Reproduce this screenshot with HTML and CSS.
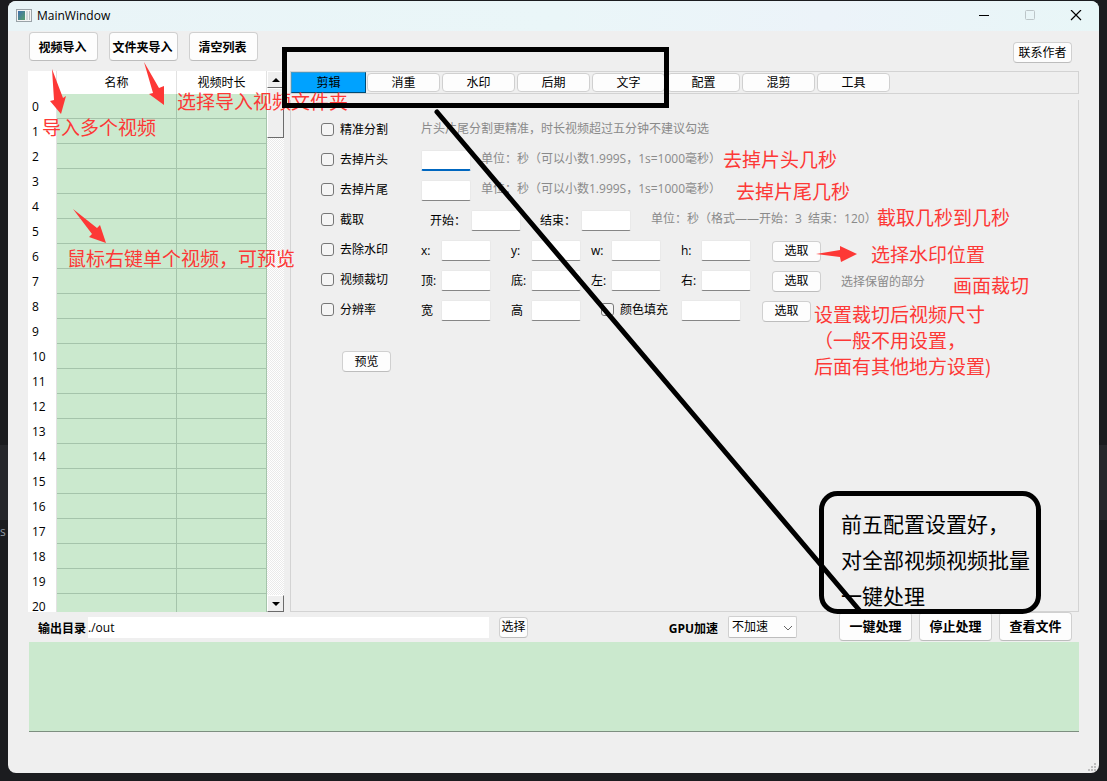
FILE: index.html
```html
<!DOCTYPE html>
<html lang="zh-CN">
<head>
<meta charset="utf-8">
<title>MainWindow</title>
<link rel="stylesheet" href="styles.css">
</head>
<body>
<span class="backdrop-text">s</span>
<div class="window">
  <header class="titlebar">
    <svg class="app-icon" width="16" height="14" viewBox="0 0 16 14" aria-hidden="true">
      <defs><linearGradient id="pane" x1="0" y1="0" x2="1" y2="1"><stop offset="0" stop-color="#3f6fae"/><stop offset="1" stop-color="#5aa06a"/></linearGradient></defs>
      <rect x="0.5" y="0.5" width="15" height="12" fill="#f4f4f4" stroke="#9aa3a8"/>
      <rect x="2" y="2" width="7" height="9" fill="url(#pane)"/>
      <rect x="10" y="2" width="2" height="9" fill="#d4d8da"/>
      <rect x="13" y="2" width="1" height="9" fill="#b9bec1"/>
    </svg>
    <h1 class="title">MainWindow</h1>
    <div class="controls">
      <button class="control" aria-label="最小化"><svg width="12" height="12" viewBox="0 0 12 12"><path d="M1 5.5h10" stroke="#000"/></svg></button>
      <button class="control" aria-label="最大化" disabled><svg width="12" height="12" viewBox="0 0 12 12"><rect x="1.500" y="0.500" width="9" height="9" rx="1" fill="none" stroke="#bcc5c8"/></svg></button>
      <button class="control" aria-label="关闭"><svg width="12" height="12" viewBox="0 0 12 12"><path d="M1 0l10 10M11 0L1 10" stroke="#000" stroke-width="1.200"/></svg></button>
    </div>
  </header>

  <div class="toolbar">
    <button class="btn big">视频导入</button>
    <button class="btn big">文件夹导入</button>
    <button class="btn big">清空列表</button>
    <button class="btn contact">联系作者</button>
  </div>

  <main class="main">
    <div class="list">
      <div class="table-clip">
        <table class="files">
          <colgroup><col class="col-index"><col><col class="col-time"></colgroup>
          <thead><tr><th></th><th>名称</th><th>视频时长</th></tr></thead>
          <tbody>
            <tr><th>0</th><td></td><td></td></tr>
            <tr><th>1</th><td></td><td></td></tr>
            <tr><th>2</th><td></td><td></td></tr>
            <tr><th>3</th><td></td><td></td></tr>
            <tr><th>4</th><td></td><td></td></tr>
            <tr><th>5</th><td></td><td></td></tr>
            <tr><th>6</th><td></td><td></td></tr>
            <tr><th>7</th><td></td><td></td></tr>
            <tr><th>8</th><td></td><td></td></tr>
            <tr><th>9</th><td></td><td></td></tr>
            <tr><th>10</th><td></td><td></td></tr>
            <tr><th>11</th><td></td><td></td></tr>
            <tr><th>12</th><td></td><td></td></tr>
            <tr><th>13</th><td></td><td></td></tr>
            <tr><th>14</th><td></td><td></td></tr>
            <tr><th>15</th><td></td><td></td></tr>
            <tr><th>16</th><td></td><td></td></tr>
            <tr><th>17</th><td></td><td></td></tr>
            <tr><th>18</th><td></td><td></td></tr>
            <tr><th>19</th><td></td><td></td></tr>
            <tr><th>20</th><td></td><td></td></tr>
          </tbody>
        </table>
      </div>
      <div class="scrollbar">
        <button class="bevel arrow" aria-label="向上"><svg width="8" height="4" viewBox="0 0 8 4"><path d="M0 4L4 0L8 4z"/></svg></button>
        <div class="bevel thumb"></div>
        <button class="bevel arrow down" aria-label="向下"><svg width="8" height="4" viewBox="0 0 8 4"><path d="M0 0H8L4 4z"/></svg></button>
      </div>
    </div>

    <section class="panel">
      <nav class="tabs">
        <button class="tab active">剪辑</button>
        <button class="tab">消重</button>
        <button class="tab">水印</button>
        <button class="tab">后期</button>
        <button class="tab">文字</button>
        <button class="tab">配置</button>
        <button class="tab">混剪</button>
        <button class="tab">工具</button>
      </nav>
      <form class="settings">
        <div class="row">
          <label class="check"><input type="checkbox"><span>精准分割</span></label>
          <span class="hint">片头片尾分割更精准，时长视频超过五分钟不建议勾选</span>
        </div>
        <div class="row">
          <label class="check"><input type="checkbox"><span>去掉片头</span></label>
          <input class="box focused" type="text" aria-label="片头秒数">
          <span class="hint after">单位：秒（可以小数1.999S，1s=1000毫秒）</span>
        </div>
        <div class="row">
          <label class="check"><input type="checkbox"><span>去掉片尾</span></label>
          <input class="box" type="text" aria-label="片尾秒数">
          <span class="hint after">单位：秒（可以小数1.999S，1s=1000毫秒）</span>
        </div>
        <div class="row">
          <label class="check"><input type="checkbox"><span>截取</span></label>
          <label class="field range"><span>开始：</span><input class="box" type="text"></label>
          <label class="field range"><span>结束：</span><input class="box" type="text"></label>
          <span class="hint end">单位：秒（格式——开始：3&nbsp; 结束：120）</span>
        </div>
        <div class="row">
          <label class="check"><input type="checkbox"><span>去除水印</span></label>
          <label class="field"><span>x:</span><input class="box" type="text"></label>
          <label class="field tight"><span>y:</span><input class="box" type="text"></label>
          <label class="field"><span>w:</span><input class="box" type="text"></label>
          <label class="field"><span>h:</span><input class="box" type="text"></label>
          <button class="btn pick" type="button">选取</button>
        </div>
        <div class="row">
          <label class="check"><input type="checkbox"><span>视频裁切</span></label>
          <label class="field"><span>顶:</span><input class="box" type="text"></label>
          <label class="field tight"><span>底:</span><input class="box" type="text"></label>
          <label class="field"><span>左:</span><input class="box" type="text"></label>
          <label class="field"><span>右:</span><input class="box" type="text"></label>
          <button class="btn pick" type="button">选取</button>
          <span class="hint end low">选择保留的部分</span>
        </div>
        <div class="row">
          <label class="check"><input type="checkbox"><span>分辨率</span></label>
          <label class="field"><span>宽</span><input class="box" type="text"></label>
          <label class="field"><span>高</span><input class="box" type="text"></label>
          <label class="check fill"><input type="checkbox"><span>颜色填充</span></label>
          <input class="box wide" type="text" aria-label="填充颜色">
          <button class="btn pick" type="button">选取</button>
        </div>
        <button class="btn preview" type="button">预览</button>
      </form>
    </section>
  </main>

  <div class="output">
    <label class="strong" for="out">输出目录</label>
    <input class="path" id="out" type="text" value="./out">
    <button class="btn choose">选择</button>
    <label class="strong gpu" for="gpu">GPU加速</label>
    <div class="select-wrap">
      <select class="select" id="gpu"><option>不加速</option></select>
      <svg class="chevron" width="10" height="6" viewBox="0 0 10 6" aria-hidden="true"><path d="M1 1l4 4l4-4" fill="none" stroke="#666"/></svg>
    </div>
    <div class="actions">
      <button class="btn action">一键处理</button>
      <button class="btn action">停止处理</button>
      <button class="btn action">查看文件</button>
    </div>
  </div>

  <textarea class="log" readonly aria-label="日志"></textarea>

  <footer class="status">
    <svg width="9" height="9" viewBox="0 0 9 9" fill="#bdbdbd" aria-hidden="true"><path d="M6 0h2v2H6zM3 3h2v2H3zM6 3h2v2H6zM0 6h2v2H0zM3 6h2v2H3zM6 6h2v2H6z"/></svg>
  </footer>
</div>

<div class="notes">
  <p class="note n-import">导入多个视频</p>
  <p class="note n-folder">选择导入视频文件夹</p>
  <p class="note n-menu">鼠标右键单个视频，可预览</p>
  <p class="note n-head">去掉片头几秒</p>
  <p class="note n-tail">去掉片尾几秒</p>
  <p class="note n-range">截取几秒到几秒</p>
  <p class="note n-mark">选择水印位置</p>
  <p class="note n-crop">画面裁切</p>
  <p class="note n-size">设置裁切后视频尺寸<br>（一般不用设置，<br>后面有其他地方设置)</p>
  <p class="note n-batch">前五配置设置好，<br>对全部视频视频批量<br>一键处理</p>
  <svg class="strokes" width="1107" height="781" viewBox="0 0 1107 781" aria-hidden="true">
    <g fill="#fd3836">
      <path d="M52 69L63 98L66 96L61 114L50 101L54 100z"/>
      <path d="M144 62L159 88L164 86L164 105L149 94L153 93z"/>
      <path d="M73 209L97 228L100 225L106 243L89 237L92 234z"/>
      <path d="M816 254L840 250L840 246L857 254L841 262L840 257z"/>
    </g>
    <g fill="none" stroke="#000" stroke-width="5">
      <rect x="284.500" y="49.500" width="382" height="56"/>
      <path d="M437 112L860 611" stroke-linecap="round"/>
      <rect x="821.500" y="493.500" width="217" height="118" rx="16"/>
    </g>
  </svg>
</div>
</body>
</html>
```

FILE: styles.css
```css
* {
  box-sizing: border-box;
}

body {
  margin: 0;
  height: 100vh;
  padding: 1px 8px 8px;
  position: relative;
  overflow: hidden;
  display: flex;
  background: linear-gradient(#1b1c1f 445px, #26272b 445px, #26272b 520px, #1b1c1f 520px);
  color: #000;
  font: 12px/16px "Open Sans", "Noto Sans CJK SC", sans-serif;
}

button,
input,
select,
textarea {
  font: inherit;
  color: inherit;
  margin: 0;
  padding: 0;
}

.backdrop-text {
  position: absolute;
  left: 0;
  top: 524px;
  color: #8f98a3;
}

.window {
  flex: 1;
  display: flex;
  flex-direction: column;
  background: #efefef;
  border-radius: 8px;
  overflow: hidden;
}

.titlebar {
  display: flex;
  align-items: center;
  height: 30px;
  padding-left: 8px;
  background: linear-gradient(90deg, #e9f4f7, #eaf6f8 50%, #ecf3f9 75%, #e8f6f7);
}

.title {
  margin: 0 0 0 5px;
  font-size: 12px;
  font-weight: 400;
}

.controls {
  display: flex;
  margin-left: auto;
}

.control {
  display: grid;
  place-items: center;
  width: 46px;
  height: 30px;
  border: 0;
  background: none;
}

.toolbar {
  display: flex;
  align-items: flex-start;
  gap: 11px;
  height: 40px;
  padding: 1px 27px 0 21px;
}

.btn {
  height: 21px;
  border: 1px solid #d0d0d0;
  border-bottom-color: #bdbdbd;
  border-radius: 4px;
  background: #fdfdfd;
  white-space: nowrap;
}

.big {
  width: 69px;
  height: 29px;
  padding: 2px 2px 0 0;
  font-weight: 700;
}

.contact {
  width: 59px;
  margin: 10px 0 0 auto;
}

.main {
  flex: 1;
  min-height: 0;
  display: flex;
  gap: 6px;
  padding: 0 20px;
}

.list {
  display: flex;
  width: 256px;
}

.table-clip {
  flex: 1;
  overflow: hidden;
  background: #fff;
}

.files {
  width: 100%;
  table-layout: fixed;
  border-collapse: separate;
  border-spacing: 0;
}

.col-index {
  width: 29px;
}

.col-time {
  width: 90px;
}

.files th,
.files td {
  height: 25px;
  padding: 0;
  font-weight: 400;
}

.files thead th {
  height: 23px;
  border-right: 1px solid #e2e2e2;
}

.files tbody th {
  padding-left: 4px;
  border-right: 1px solid #e2e2e2;
  text-align: left;
}

.files td {
  background: #cbe9ce;
  border-right: 1px solid #a5c4ab;
  border-bottom: 1px solid #a5c4ab;
}

.scrollbar {
  display: flex;
  flex-direction: column;
  width: 17px;
  background: repeating-conic-gradient(#fff 0 25%, #eaeaea 0 50%) 0 0 / 2px 2px;
}

.bevel {
  border: 1px solid;
  border-color: #fff #6b6b6b #6b6b6b #fff;
  background: #efefef;
}

.arrow {
  display: grid;
  place-items: center;
  height: 17px;
}

.thumb {
  height: 50px;
}

.down {
  margin-top: auto;
}

.panel {
  flex: 1;
  min-width: 0;
  display: flex;
  flex-direction: column;
  gap: 6px;
}

.tabs {
  display: flex;
  align-items: center;
  gap: 2px;
  height: 23px;
  border: 1px solid #d3d3d3;
}

.tab {
  width: 73px;
  height: 19px;
  border: 1px solid #d0d0d0;
  border-radius: 4px;
  background: #fdfdfd;
}

.tab.active {
  width: 75px;
  height: 21px;
  margin-right: -1px;
  border: 1px solid;
  border-color: #3f9ac9 #004a73 #004a73 #3f9ac9;
  border-radius: 0;
  background: #00a2ff;
}

.settings {
  flex: 1;
  padding: 14px 0 0 30px;
  border: 1px solid #d3d3d3;
  border-top: 0;
}

.row {
  display: flex;
  align-items: center;
  height: 30px;
}

.check {
  display: flex;
  align-items: center;
  gap: 6px;
  width: 100px;
}

.check span {
  padding-top: 2px;
}

.check input {
  appearance: none;
  width: 13px;
  height: 13px;
  border: 1px solid #777;
  border-radius: 3px;
  background: #f5f5f5;
}

.fill {
  width: 80px;
}

.hint {
  color: #8a8a8a;
  white-space: nowrap;
}

.after {
  margin-left: 10px;
}

.end {
  margin-left: 20px;
}

.low {
  padding-top: 5px;
}

.box {
  width: 50px;
  height: 21px;
  border: 1px solid #e9e9e9;
  border-bottom-color: #868686;
  border-radius: 2px;
  background: #fff;
}

.row > .box,
.field {
  margin-top: 2px;
}

.box.focused {
  border-bottom: 2px solid #0067c0;
}

.wide {
  width: 60px;
}

.field {
  display: grid;
  grid-template-columns: 20px 50px;
  align-items: center;
  margin-right: 20px;
  white-space: nowrap;
}

.field span {
  padding-top: 2px;
}

.tight {
  margin-right: 10px;
}

.range {
  grid-template-columns: 41px 50px;
  margin-left: 9px;
  margin-right: 0;
}

.range + .range {
  margin-left: 19px;
}

.pick {
  width: 49px;
  margin-top: 4px;
  margin-left: 1px;
}

.wide + .pick {
  margin-left: 21px;
}

.preview {
  width: 49px;
  margin: 27px 0 0 21px;
}

.output {
  display: flex;
  align-items: center;
  height: 30px;
  padding: 0 27px 0 30px;
}

.strong {
  padding-top: 4px;
  font-weight: 700;
  white-space: nowrap;
}

.path {
  width: 401px;
  height: 21px;
  margin: 0 10px 0 2px;
  border: 0;
  background: #fff;
}

.choose {
  width: 29px;
}

.gpu {
  margin-left: auto;
}

.select-wrap {
  position: relative;
  margin-left: 10px;
}

.select {
  appearance: none;
  width: 69px;
  height: 22px;
  padding-left: 3px;
  border: 1px solid #d0d0d0;
  border-bottom-color: #bdbdbd;
  border-radius: 2px;
  background: #fdfdfd;
}

.chevron {
  position: absolute;
  right: 4px;
  top: 9px;
}

.actions {
  display: flex;
  gap: 7px;
  margin-left: 42px;
}

.action {
  width: 73px;
  height: 29px;
  margin-bottom: 2px;
  font-size: 13px;
  font-weight: 700;
}

.log {
  height: 90px;
  margin: 0 20px 0 21px;
  border: 0;
  border-bottom: 1px solid #7d8f80;
  background: #cbe9ce;
  resize: none;
}

.status {
  display: flex;
  align-items: flex-end;
  justify-content: flex-end;
  height: 41px;
  padding: 0 2px 1px;
}

.notes {
  position: absolute;
  inset: 0;
  pointer-events: none;
}

.strokes {
  position: absolute;
  left: 0;
  top: 0;
}

.note {
  position: absolute;
  margin: 0;
  color: #fd3836;
  font: 400 19px/26px "Noto Sans CJK SC", sans-serif;
  white-space: nowrap;
}

.n-import { left: 42px; top: 114px; }
.n-folder { left: 177px; top: 88px; }
.n-menu { left: 67px; top: 245px; }
.n-head { left: 723px; top: 146px; }
.n-tail { left: 736px; top: 178px; }
.n-range { left: 877px; top: 204px; }
.n-mark { left: 871px; top: 241px; }
.n-crop { left: 953px; top: 272px; }
.n-size { left: 814px; top: 301px; }

.n-batch {
  left: 841px;
  top: 505px;
  color: #000;
  font-size: 21px;
  line-height: 36px;
}
```
